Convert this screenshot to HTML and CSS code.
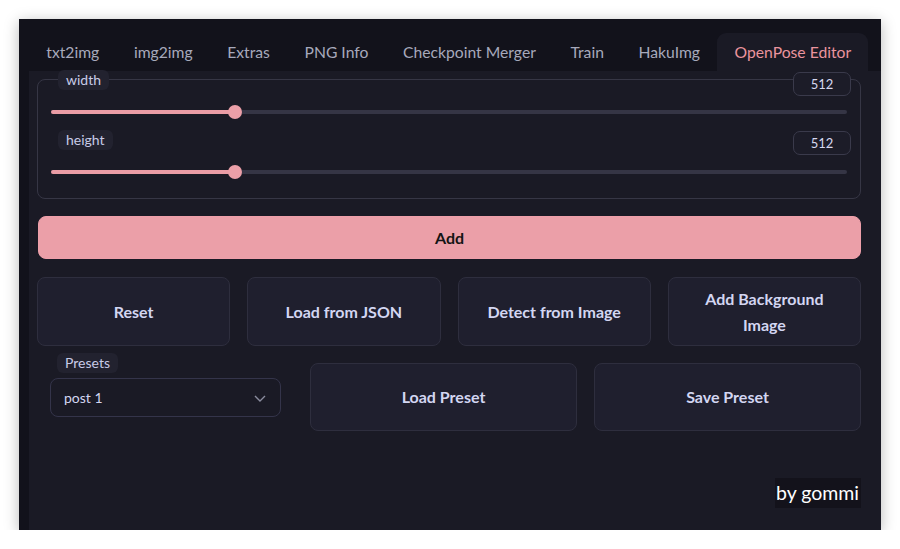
FILE: index.html
```html
<!DOCTYPE html>
<html>
<head>
<meta charset="utf-8">
<link rel="stylesheet" href="styles.css">
</head>
<body>
<div class="window">
  <div class="tabs">
    <div class="tab">txt2img</div>
    <div class="tab">img2img</div>
    <div class="tab">Extras</div>
    <div class="tab">PNG Info</div>
    <div class="tab">Checkpoint Merger</div>
    <div class="tab">Train</div>
    <div class="tab">HakuImg</div>
    <div class="tab active">OpenPose Editor</div>
  </div>
  <div class="panel">
    <div class="fieldset">
      <div class="row first">
        <div class="head">
          <span class="chip">width</span>
          <span class="num">512</span>
        </div>
        <div class="slider"><div class="fill" style="width:23.1%"></div><div class="thumb" style="left:23.1%"></div></div>
      </div>
      <div class="row second">
        <div class="head">
          <span class="chip">height</span>
          <span class="num">512</span>
        </div>
        <div class="slider"><div class="fill" style="width:23.1%"></div><div class="thumb" style="left:23.1%"></div></div>
      </div>
    </div>
    <button class="add">Add</button>
    <div class="btnrow">
      <button class="btn">Reset</button>
      <button class="btn">Load from JSON</button>
      <button class="btn">Detect from Image</button>
      <button class="btn">Add Background<br>Image</button>
    </div>
    <div class="presetrow">
      <div class="presets">
        <span class="chip">Presets</span>
        <div class="select">
          <span>post 1</span>
          <svg width="14" height="14" viewBox="0 0 14 14"><path d="M2 5 L7 10 L12 5" fill="none" stroke="#8a8c9e" stroke-width="1.4"/></svg>
        </div>
      </div>
      <button class="btn tall">Load Preset</button>
      <button class="btn tall">Save Preset</button>
    </div>
    <div class="footer"><span class="sign">by gommi</span></div>
  </div>
</div>
</body>
</html>
```
FILE: styles.css
```css
* { box-sizing: border-box; }
body {
  margin: 0;
  background: #ffffff;
  font-family: Lato, "Noto Sans", sans-serif;
}
.window {
  margin: 19px 0 0 19px;
  width: 862px;
  height: 511px;
  background: #12121b;
  box-shadow: 0 3px 14px rgba(0,0,0,0.28);
  display: flex;
  flex-direction: column;
}
.tabs {
  height: 52px;
  display: flex;
  align-items: flex-end;
  padding-left: 10px;
}
.tab {
  height: 38px;
  padding: 0 17.3px;
  font-size: 15.7px;
  color: #a7a9bb;
  display: flex;
  align-items: center;
  border-radius: 9px 9px 0 0;
}
.tab.active {
  background: #1a1a25;
  color: #ea949e;
}
.panel {
  flex: 1;
  margin-left: 10px;
  background: #1a1a25;
  padding: 8px 20px 0 8px;
  display: flex;
  flex-direction: column;
}
.fieldset {
  border: 1px solid #363645;
  border-radius: 8px;
  padding: 0 9px 18px 13px;
  height: 120px;
}
.row.first { margin-top: -10px; }
.row.second { margin-top: 16px; }
.head {
  display: flex;
  justify-content: space-between;
  align-items: flex-start;
  height: 25px;
}
.chip {
  display: inline-block;
  background: #22222f;
  color: #c8cbe8;
  font-size: 14px;
  line-height: 20px;
  padding: 0 8px;
  border-radius: 6px;
  margin-left: 7px;
}
.num {
  margin-top: 2px;
  width: 58px;
  height: 24px;
  border: 1px solid #3a3a4b;
  background: #1c1c28;
  border-radius: 7px;
  color: #d6d8f0;
  font-size: 13px;
  display: flex;
  align-items: center;
  justify-content: center;
}
.row.second .num { margin-top: 1px; }
.slider {
  position: relative;
  height: 4px;
  margin: 15px 4px 0 0;
  background: #353545;
  border-radius: 2px;
}
.fill {
  height: 4px;
  background: #ea9ca5;
  border-radius: 2px;
}
.thumb {
  position: absolute;
  top: -5px;
  width: 14px;
  height: 14px;
  margin-left: -7px;
  border-radius: 50%;
  background: #eb9fa8;
}
button {
  font-family: inherit;
  cursor: pointer;
}
.add {
  margin-top: 17px;
  height: 43px;
  margin-left: 1px;
  background: #eb9fa8;
  border: 1px solid #ee9faa;
  border-radius: 8px;
  font-size: 16px;
  font-weight: 700;
  color: #141414;
}
.btnrow {
  margin-top: 18px;
  display: flex;
  gap: 17px;
}
.btn {
  flex: 1;
  height: 69px;
  background: #1f1f2e;
  border: 1px solid #2e2e3e;
  border-radius: 8px;
  color: #d3d6f2;
  font-size: 16px;
  font-weight: 700;
  line-height: 26px;
}
.presetrow {
  margin-top: 7px;
  display: flex;
  gap: 17px;
  padding-left: 13px;
}
.presets {
  width: 231px;
  margin-right: 12px;
  display: flex;
  flex-direction: column;
  align-items: flex-start;
}
.select {
  margin-top: 5px;
  width: 231px;
  height: 39px;
  border: 1px solid #34344a;
  border-radius: 8px;
  display: flex;
  align-items: center;
  justify-content: space-between;
  padding: 0 13px 0 13px;
  color: #d3d6f2;
  font-size: 14px;
}
.btn.tall {
  margin-top: 10px;
  height: 68px;
}
.footer {
  margin-top: 47px;
  display: flex;
  justify-content: flex-end;
}
.sign {
  background: #13121b;
  color: #ffffff;
  font-size: 19.5px;
  line-height: 30px;
  padding: 0 2px 0 1px;
}
```
